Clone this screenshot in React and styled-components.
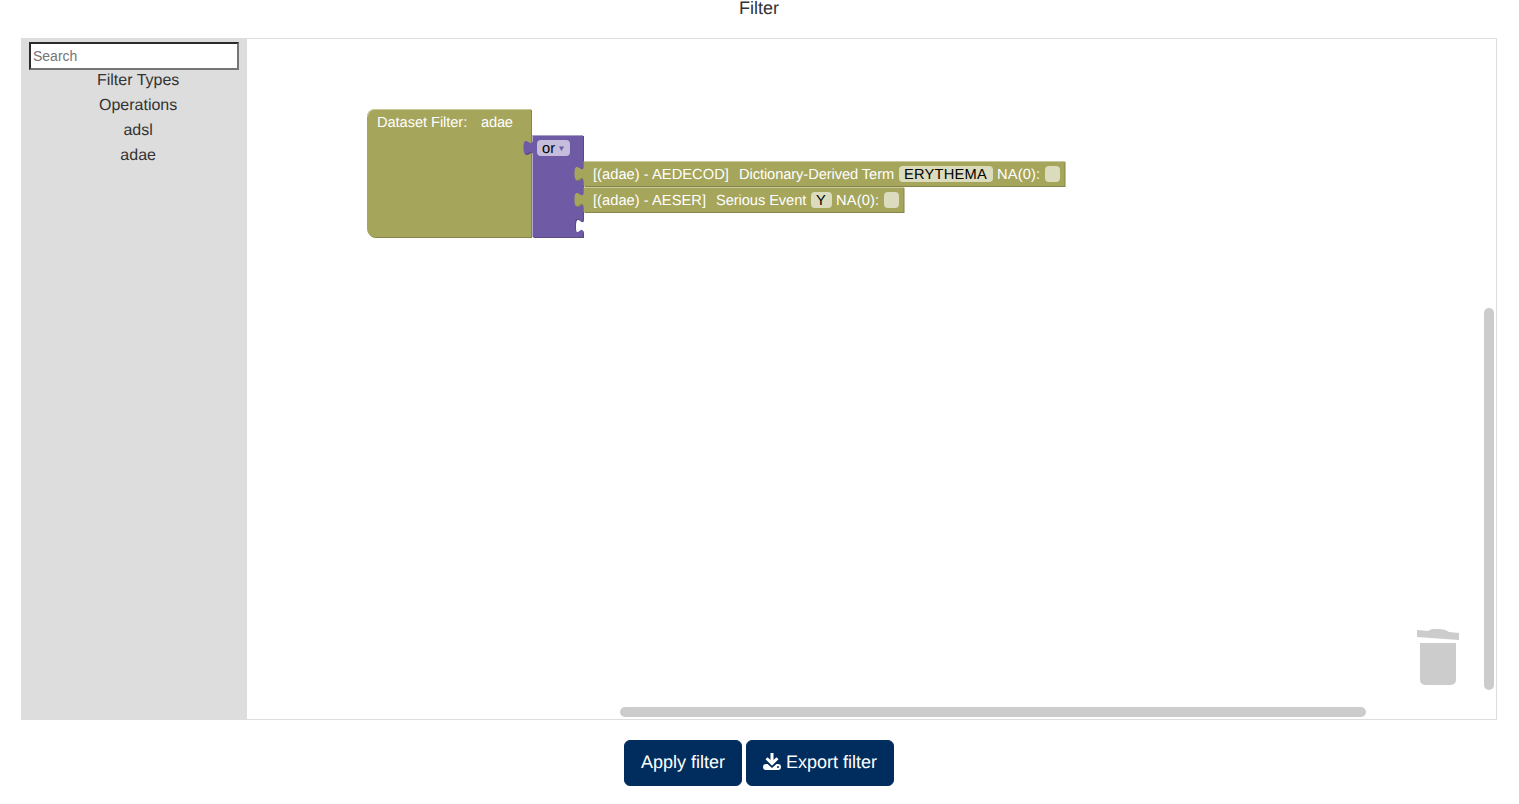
import React from "react";
import styled, { createGlobalStyle } from "styled-components";

const Global = createGlobalStyle`
  html, body { margin: 0; padding: 0; background: #fff; }
  body {
    font-family: "Liberation Sans", Arial, sans-serif;
    color: #333;
    overflow: hidden;
    text-rendering: geometricPrecision;
  }
  * { box-sizing: border-box; }
`;

const Page = styled.div`
  width: 1518px;
  height: 804px;
  display: flex;
  flex-direction: column;
  align-items: center;
`;
const Title = styled.div`
  height: 38px;
  font-size: 18px;
  line-height: 17px;
  color: #333;
`;
const Panel = styled.div`
  width: 1476px;
  height: 682px;
  border: 1px solid #ddd;
  display: flex;
`;
const Toolbox = styled.div`
  width: 226px;
  margin: -1px 0 -1px -1px;
  background: #ddd;
  padding: 4px 8px;
  display: flex;
  flex-direction: column;
  flex-shrink: 0;
`;
const SearchBox = styled.input`
  width: 210px;
  height: 28px;
  border-width: 2px;
  border-style: solid;
  border-color: #2b2b2b #767676 #767676 #2b2b2b;
  padding: 1px 2px;
  background: #fff;
  font-family: inherit;
  font-size: 14px;
  outline: none;
  &::placeholder { color: #757575; opacity: 1; }
`;
const Category = styled.div`
  height: 25px;
  line-height: 21px;
  font-size: 16px;
  color: #333;
  padding-left: 8.25px;
  text-align: center;
`;
const Canvas = styled.div`
  position: relative;
  flex: 1;
  overflow: hidden;
`;
const Diagram = styled.svg`
  display: block;
  width: 100%;
  height: 100%;
`;
const NodeLabel = styled.span`
  position: absolute;
  left: ${(p) => p.$x - 247}px;
  top: ${(p) => p.$baseline - 12 - 39}px;
  font-size: 14.667px;
  line-height: 16px;
  white-space: nowrap;
  letter-spacing: ${(p) => p.$track || 0}px;
  color: ${(p) => (p.$field ? "#000" : "#fff")};
`;
const FieldBg = styled.rect`
  fill: #fff;
  fill-opacity: 0.6;
`;
const VScroll = styled.div`
  position: absolute;
  left: 1237px;
  top: 269px;
  width: 10px;
  height: 382px;
  border-radius: 5px;
  background: #ccc;
`;
const HScroll = styled.div`
  position: absolute;
  left: 373px;
  top: 668px;
  width: 746px;
  height: 10px;
  border-radius: 5px;
  background: #ccc;
`;
const Trash = styled.svg`
  position: absolute;
  left: 1168px;
  top: 590px;
  width: 46px;
  height: 60px;
`;
const Actions = styled.div`
  display: flex;
  gap: 4px;
  margin-top: 20px;
`;
const ActionButton = styled.button`
  height: 46px;
  padding: 0 16px 2px;
  border: 1px solid #002d5d;
  border-radius: 6px;
  background: #002d5d;
  color: #fff;
  font-family: inherit;
  font-size: 18px;
  line-height: 20px;
  text-rendering: geometricPrecision;
  display: flex;
  align-items: center;
  gap: 5px;
`;
const ExportIcon = styled.svg`
  width: 18px;
  height: 18px;
  margin-bottom: 2px;
  flex-shrink: 0;
`;

const TAB_DOWN = "v 5 c 0,10 -8,-8 -8,7.5 s 8,-2.5 8,7.5";
const TAB_UP = "c 0,-10 -9,8 -9,-7.5 s 9,2.5 9,-7.5 v -5";

const OLIVE = { fill: "#a5a55b", dark: "#84844a", light: "#c9c99d" };
const PURPLE = { fill: "#6f5ba5", dark: "#594984", light: "#a99dc9" };

function Shape({ d, light, c }) {
  return (
    <g>
      <path d={d} transform="translate(1 1)" fill={c.dark} />
      <path d={d} fill={c.fill} />
      <path d={light} fill="none" stroke={c.light} strokeWidth="1" />
    </g>
  );
}

function FieldShape({ y, width, fieldX, fieldW, boxX }) {
  const x = 583.5;
  const d = `M ${x} ${y} H ${x + width} V ${y + 25} H ${x} V ${y + 20} ${TAB_UP} z`;
  return (
    <g>
      <Shape d={d} c={OLIVE} light={`M ${x + 0.5} ${y + 0.5} H ${x + width - 0.5}`} />
      <FieldBg x={fieldX} y={y + 5} width={fieldW} height="16" rx="4" ry="4" />
      <FieldBg x={boxX} y={y + 5} width="15" height="16" rx="4" ry="4" />
    </g>
  );
}

function FieldLabels({ y, name, nameTrack, desc, descX, descTrack, value, valueX, valueTrack, naX }) {
  return (
    <>
      <NodeLabel $x={593} $baseline={y + 18} $track={nameTrack}>{name}</NodeLabel>
      <NodeLabel $x={descX} $baseline={y + 18} $track={descTrack}>{desc}</NodeLabel>
      <NodeLabel $x={valueX} $baseline={y + 18} $track={valueTrack} $field>{value}</NodeLabel>
      <NodeLabel $x={naX} $baseline={y + 18} $track={0.15}>NA(0):</NodeLabel>
    </>
  );
}

export default function App() {
  const dataset =
    "M 367 117 A 8 8 0 0 1 375 109 H 531 V 237 H 375 A 8 8 0 0 1 367 229 z";
  const or =
    `M 532.5 135 H 583 V 161 ${TAB_DOWN} V 187 ${TAB_DOWN} V 213 ${TAB_DOWN} V 237 H 532.5 V 155 ${TAB_UP} z`;
  return (
    <Page>
      <Global />
      <Title>Filter</Title>
      <Panel>
        <Toolbox>
          <SearchBox placeholder="Search" />
          <Category>Filter Types</Category>
          <Category>Operations</Category>
          <Category>adsl</Category>
          <Category>adae</Category>
        </Toolbox>
        <Canvas>
          <Diagram>
            <g transform="translate(-247 -39)">
              <Shape
                d={dataset}
                c={OLIVE}
                light="M 367.5 117 A 7.5 7.5 0 0 1 375 109.5 H 530.5"
              />
              <Shape d={or} c={PURPLE} light="M 533 135.5 H 583" />
              <FieldBg x="537" y="140" width="33" height="16" rx="4" ry="4" />
              <polygon points="559,146.5 564,146.5 561.5,151" fill={PURPLE.fill} />
              <FieldShape y={161} width={481} fieldX={899} fieldW={94} boxX={1045} />
              <FieldShape y={187} width={320} fieldX={811} fieldW={21} boxX={884} />
            </g>
          </Diagram>
          <NodeLabel $x={377} $baseline={127} $track={-0.07}>Dataset Filter:</NodeLabel>
          <NodeLabel $x={481} $baseline={127} $track={-0.2}>adae</NodeLabel>
          <NodeLabel $x={542} $baseline={153} $field>or</NodeLabel>
          <FieldLabels
            y={161}
            name="[(adae) - AEDECOD]"
            nameTrack={0.04}
            desc="Dictionary-Derived Term"
            descX={739}
            descTrack={-0.08}
            value="ERYTHEMA"
            valueX={904}
            valueTrack={0.22}
            naX={997}
          />
          <FieldLabels
            y={187}
            name="[(adae) - AESER]"
            nameTrack={0.04}
            desc="Serious Event"
            descX={716}
            descTrack={-0.08}
            value="Y"
            valueX={816}
            naX={836}
          />
          <VScroll />
          <HScroll />
          <Trash viewBox="0 0 46 60">
            <path
              d="M 5 56 V 14 H 41 V 51 A 5 5 0 0 1 36 56 H 10 A 5 5 0 0 1 5 51 z"
              fill="#ccc"
            />
            <path
              d="M 2 1 L 13 2 Q 17 -1 24 0 Q 30 0 34 3 L 44 4 V 11 L 2 8 z"
              fill="#ccc"
            />
          </Trash>
        </Canvas>
      </Panel>
      <Actions>
        <ActionButton>Apply filter</ActionButton>
        <ActionButton>
          <ExportIcon viewBox="0 0 18 18">
            <path
              d="M7.5 1 H10.5 V8 L13.5 5.2 L15.5 7.2 L9 13.7 L2.5 7.2 L4.5 5.2 L7.5 8 z"
              fill="#fff"
            />
            <path
              d="M0 15 Q0 12 3 12 H4.5 L9 16 L13.5 12 H15 Q18 12 18 15 Q18 18 15 18 H3 Q0 18 0 15 z"
              fill="#fff"
            />
            <circle cx="15" cy="15" r="1" fill="#002d5d" />
          </ExportIcon>
          Export filter
        </ActionButton>
      </Actions>
    </Page>
  );
}
